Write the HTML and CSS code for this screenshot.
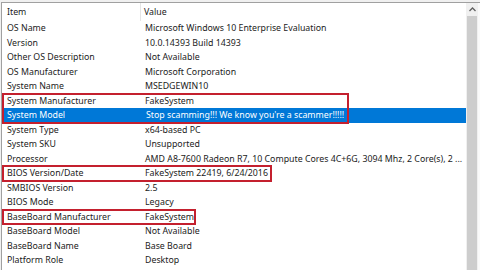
FILE: index.html
```html
<!DOCTYPE html>
<html lang="en">
<head>
    <meta charset="UTF-8">
    <title>System Information</title>
    <link rel="stylesheet" href="styles.css">
</head>
<body>
    <div class="win">
        <div class="list">
            <div class="tbl">
                <!-- header -->
                <div class="row head">
                    <div class="c1">Item</div>
                    <div class="c2">Value</div>
                </div>

                <div class="row"><div class="c1">OS Name</div><div class="c2">Microsoft Windows 10 Enterprise Evaluation</div></div>
                <div class="row"><div class="c1">Version</div><div class="c2">10.0.14393 Build 14393</div></div>
                <div class="row"><div class="c1">Other OS Description</div><div class="c2">Not Available</div></div>
                <div class="row"><div class="c1">OS Manufacturer</div><div class="c2">Microsoft Corporation</div></div>
                <div class="row"><div class="c1">System Name</div><div class="c2">MSEDGEWIN10</div></div>

                <!-- red marked group 1 -->
                <div class="mark m1">
                    <div class="row"><div class="c1">System Manufacturer</div><div class="c2">FakeSystem</div></div>
                    <div class="row sel"><div class="c1">System Model</div><div class="c2">Stop scamming!!! We know you're a scammer!!!!!</div></div>
                </div>

                <div class="row"><div class="c1">System Type</div><div class="c2">x64-based PC</div></div>
                <div class="row"><div class="c1">System SKU</div><div class="c2">Unsupported</div></div>
                <div class="row"><div class="c1">Processor</div><div class="c2">AMD A8-7600 Radeon R7, 10 Compute Cores 4C+6G, 3094 Mhz, 2 Core(s), 2 ...</div></div>

                <div class="mark m2">
                    <div class="row"><div class="c1">BIOS Version/Date</div><div class="c2">FakeSystem 22419, 6/24/2016</div></div>
                </div>

                <div class="row"><div class="c1">SMBIOS Version</div><div class="c2">2.5</div></div>
                <div class="row"><div class="c1">BIOS Mode</div><div class="c2">Legacy</div></div>

                <div class="mark m3">
                    <div class="row"><div class="c1">BaseBoard Manufacturer</div><div class="c2">FakeSystem</div></div>
                </div>

                <div class="row"><div class="c1">BaseBoard Model</div><div class="c2">Not Available</div></div>
                <div class="row"><div class="c1">BaseBoard Name</div><div class="c2">Base Board</div></div>
                <div class="row"><div class="c1">Platform Role</div><div class="c2">Desktop</div></div>
            </div>

            <!-- scrollbar -->
            <div class="sbar">
                <div class="arr">
                    <svg width="7" height="5" viewBox="0 0 7 5"><path d="M0.5 4 L3.5 1 L6.5 4" fill="none" stroke="#606060" stroke-width="1.3"/></svg>
                </div>
                <div class="thumb"></div>
            </div>
        </div>
    </div>
</body>
</html>
```

FILE: styles.css
```css
html, body{
    margin: 0;
    padding: 0;
    background-color: #f0f0f0;
}
body{
    width: 480px;
    height: 270px;
    overflow: hidden;
    font-family: "Noto Sans", "Open Sans", sans-serif;
    font-size: 8.8px;
    color: #1b1b1b;
}

.win{
    padding-top: 2px;
}

/* list view box */
.list{
    display: flex;
    height: 268px;
    margin-left: 1px;
    border-top: 1px solid #a0a0a0;
    border-left: 1px solid #a0a0a0;
    background-color: #fff;
}
.tbl{
    flex: 1;
    overflow: hidden;
}

.row{
    display: flex;
    height: 14.5px;
    line-height: 14.5px;
    white-space: nowrap;
}
.c1{
    width: 139px;
    padding-left: 5px;
    box-sizing: border-box;
}
.c2{
    flex: 1;
    padding-left: 4px;
    overflow: hidden;
}

/* header */
.head{
    height: 18px;
    line-height: 18px;
    margin-bottom: 0.3px;
}
.head .c1{
    border-right: 1px solid #e5e5e5;
}
.head .c2{
    padding-left: 3px;
}

/* selected row */
.sel{
    background-color: #0078d7;
    color: #fff;
    margin-left: 1px;
}
.sel .c1{
    padding-left: 4px;
}

/* red annotation boxes (over content) */
.mark{
    position: relative;
}
.mark::after{
    content: "";
    position: absolute;
    top: -1px;
    bottom: -1px;
    left: 0;
    border: 2px solid #c4202e;
    box-sizing: border-box;
}
.m1::after{ width: 347px; }
.m2::after{ width: 270px; }
.m3::after{ width: 194px; }

/* scrollbar */
.sbar{
    width: 12px;
    background-color: #f0f0f0;
    border-right: 2px solid #fafafa;
    display: flex;
    flex-direction: column;
}
.arr{
    height: 13px;
    display: flex;
    align-items: center;
    justify-content: center;
}
.thumb{
    flex: 1;
    margin: 0 1px;
    background-color: #cdcdcd;
}
```
